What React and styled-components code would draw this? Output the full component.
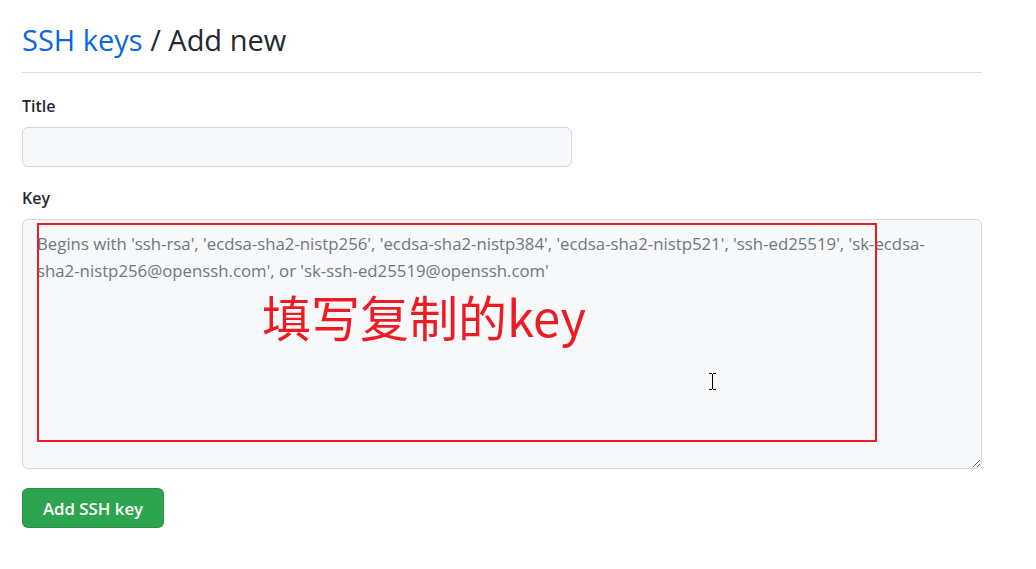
import React from "react";
import styled, { createGlobalStyle } from "styled-components";

const Global = createGlobalStyle`
  html, body { margin: 0; padding: 0; background: #ffffff; }
  body { font-family: "Open Sans", "Noto Sans", "Liberation Sans", sans-serif; color: #24292f; }
`;

const Page = styled.div`
  width: 960px;
  padding: 20px 0 0 22px;
`;

const Header = styled.div`
  border-bottom: 1px solid #d8dee4;
  padding-bottom: 12px;
  margin-bottom: 21px;
`;

const Heading = styled.h1`
  margin: 0;
  font-size: 29px;
  font-weight: 400;
  line-height: 40px;
  color: #24292f;
`;

const Crumb = styled.a`
  color: #0969da;
  text-decoration: none;
`;

const Group = styled.div`
  margin-bottom: ${(p) => p.$gap || 19}px;
`;

const Label = styled.label`
  display: block;
  font-size: 16px;
  font-weight: 600;
  line-height: 24px;
  margin-bottom: 9px;
`;

const Input = styled.input`
  box-sizing: border-box;
  display: block;
  width: 550px;
  height: 40px;
  padding: 0 14px;
  background: #f6f8fa;
  border: 1px solid #d0d7de;
  border-radius: 6px;
  font: inherit;
  font-size: 16px;
  outline: none;
`;

const AreaWrap = styled.div`
  position: relative;
  width: 960px;
`;

const TextArea = styled.textarea`
  box-sizing: border-box;
  display: block;
  width: 960px;
  height: 250px;
  padding: 10px 14px;
  background: #f6f8fa;
  border: 1px solid #d0d7de;
  border-radius: 6px;
  font-family: "Open Sans", "Noto Sans", sans-serif;
  font-size: 16.8px;
  line-height: 27px;
  color: #24292f;
  outline: none;
  resize: vertical;
  &::placeholder { color: #6e7781; }
`;

const Annotation = styled.div`
  position: absolute;
  left: 15px;
  top: 4px;
  width: 840px;
  height: 219px;
  box-sizing: border-box;
  border: 2px solid #ed1c24;
  pointer-events: none;
`;

const AnnotationText = styled.div`
  position: absolute;
  left: 223px;
  top: 61px;
  font-family: "Noto Sans CJK SC", "Noto Sans", sans-serif;
  font-size: 49px;
  line-height: 60px;
  color: #ed1c24;
  pointer-events: none;
  white-space: nowrap;
`;

const Cursor = styled.svg`
  position: absolute;
  left: 686px;
  top: 154px;
  pointer-events: none;
`;

const Button = styled.button`
  height: 40px;
  padding: 0 20px;
  background: #2da44e;
  color: #ffffff;
  border: 1px solid rgba(27, 31, 36, 0.15);
  border-radius: 6px;
  font-family: "Open Sans", "Noto Sans", sans-serif;
  font-size: 16.8px;
  font-weight: 600;
  cursor: pointer;
`;

const placeholder =
  "Begins with 'ssh-rsa', 'ecdsa-sha2-nistp256', 'ecdsa-sha2-nistp384', 'ecdsa-sha2-nistp521', 'ssh-ed25519', 'sk-ecdsa-sha2-nistp256@openssh.com', or 'sk-ssh-ed25519@openssh.com'";

export default function App() {
  return (
    <>
      <Global />
      <Page>
        <Header>
          <Heading>
            <Crumb href="#">SSH keys</Crumb> / Add new
          </Heading>
        </Header>
        <Group>
          <Label>Title</Label>
          <Input type="text" />
        </Group>
        <Group>
          <Label>Key</Label>
          <AreaWrap>
            <TextArea placeholder={placeholder} />
            <Annotation>
              <AnnotationText>填写复制的key</AnnotationText>
            </Annotation>
            <Cursor width="9" height="17" viewBox="0 0 9 17">
              <path d="M1 0.5h3M5 0.5h3M4.5 1v15M1 16.5h3M5 16.5h3" stroke="#000" strokeWidth="1" fill="none" />
            </Cursor>
          </AreaWrap>
        </Group>
        <Button>Add SSH key</Button>
      </Page>
    </>
  );
}
